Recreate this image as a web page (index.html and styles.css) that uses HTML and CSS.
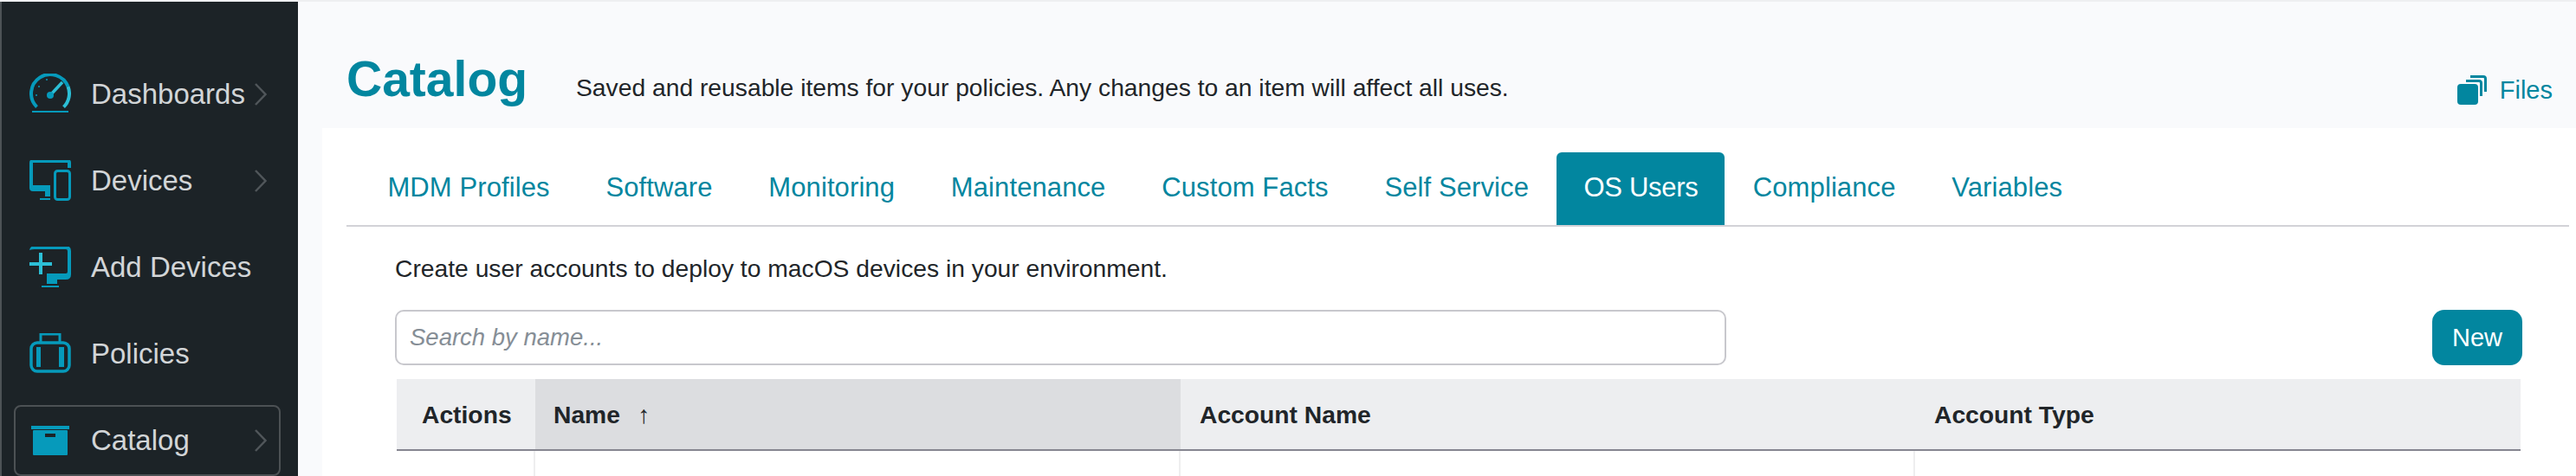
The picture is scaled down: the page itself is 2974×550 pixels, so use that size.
FILE: index.html
```html
<!DOCTYPE html>
<html lang="en">
<head>
<meta charset="utf-8">
<title>Catalog</title>
<link rel="stylesheet" href="styles.css">
</head>
<body>
<div class="app">
  <aside class="sidebar">
    <nav class="nav">
      <a class="nav-item">
        <svg class="nav-icon" width="48" height="48" viewBox="0 0 48 48"><path class="ln" d="M8.500 38.600A22 22 0 1 1 44.500 15" stroke-width="4"/><path class="lt" d="M44.500 15A22 22 0 0 1 39.500 38.600" stroke-width="4"/><path class="ln" d="M3 44H45" stroke-width="2"/><path class="lt" d="M24 25L38 10" stroke-width="3.500"/><circle class="fl" cx="24" cy="25" r="4"/><circle class="fl" cx="11" cy="15" r="1"/><circle class="fl" cx="20" cy="7" r="1"/><circle class="fl" cx="8" cy="25" r="1"/></svg>
        <span class="nav-label">Dashboards</span>
        <svg class="chev" width="14" height="26" viewBox="0 0 14 26"><path d="M1 1L12.500 13L1 25"/></svg>
      </a>
      <a class="nav-item">
        <svg class="nav-icon" width="48" height="48" viewBox="0 1 48 48"><path class="fl" d="M4 0H44Q48 0 48 4V10H44V4H4V30H24V43H18V37H4Q0 37 0 33V4Q0 0 4 0Z"/><rect class="fl" x="12" y="45" width="12" height="2"/><rect class="ln" x="29.500" y="13.500" width="17" height="33" rx="3" stroke-width="3"/></svg>
        <span class="nav-label">Devices</span>
        <svg class="chev" width="14" height="26" viewBox="0 0 14 26"><path d="M1 1L12.500 13L1 25"/></svg>
      </a>
      <a class="nav-item">
        <svg class="nav-icon" width="48" height="48" viewBox="0 1 48 48"><path class="fl" d="M0 5Q1 0 6 0H42Q48 0 48 6V33Q48 39 42 39H32V44H20V32H42Q44 32 44 30V6Q44 4 42 4H6Q3 4 0 5Z"/><rect class="fl" x="14" y="46" width="20" height="2"/><path class="lt" d="M0 21H26M13 8V33" stroke-width="4"/></svg>
        <span class="nav-label">Add Devices</span>
      </a>
      <a class="nav-item">
        <svg class="nav-icon" width="48" height="48" viewBox="0 1 48 48"><rect class="ln" x="2" y="12" width="44" height="33" rx="7" stroke-width="3.500"/><path class="ln" d="M13 11V2H35V11" stroke-width="3"/><rect class="fl" x="8" y="17" width="5" height="23"/><rect class="fl" x="34" y="17" width="6" height="23"/></svg>
        <span class="nav-label">Policies</span>
      </a>
      <a class="nav-item nav-item-active">
        <svg class="nav-icon" width="48" height="48" viewBox="0 0 48 48"><rect class="fl" x="2" y="7" width="44" height="4"/><rect class="fl" x="4" y="12" width="40" height="29" rx="1"/><rect class="hole" x="18" y="16" width="12" height="4"/></svg>
        <span class="nav-label">Catalog</span>
        <svg class="chev" width="14" height="26" viewBox="0 0 14 26"><path d="M1 1L12.500 13L1 25"/></svg>
      </a>
    </nav>
  </aside>
  <main class="main">
    <header class="page-head">
      <h1 class="page-title">Catalog</h1>
      <p class="page-desc">Saved and reusable items for your policies. Any changes to an item will affect all uses.</p>
      <a class="files-link">
        <svg class="files-icon" width="34" height="34" viewBox="0 0 34 34"><path class="files-back" d="M15 1.500H30Q32.500 1.500 32.500 4V19M10 6.500H25Q27.500 6.500 27.500 9V24"/><rect class="files-front" x="0" y="10" width="24" height="24" rx="4"/></svg>
        <span>Files</span>
      </a>
    </header>
    <section class="panel">
      <div class="tabs">
        <a class="tab">MDM Profiles</a>
        <a class="tab">Software</a>
        <a class="tab">Monitoring</a>
        <a class="tab">Maintenance</a>
        <a class="tab">Custom Facts</a>
        <a class="tab">Self Service</a>
        <a class="tab tab-active">OS Users</a>
        <a class="tab">Compliance</a>
        <a class="tab">Variables</a>
      </div>
      <div class="content">
        <p class="intro">Create user accounts to deploy to macOS devices in your environment.</p>
        <div class="toolbar">
          <input class="search" type="text" placeholder="Search by name...">
          <button class="btn-new" type="button">New</button>
        </div>
        <div class="table">
          <div class="row row-head">
            <div class="cell cell-actions">Actions</div>
            <div class="cell cell-name cell-sorted">Name<span class="sort-arrow">↑</span></div>
            <div class="cell cell-account">Account Name</div>
            <div class="cell cell-type">Account Type</div>
          </div>
          <div class="row row-body">
            <div class="cell cell-actions"></div>
            <div class="cell cell-name"></div>
            <div class="cell cell-account"></div>
            <div class="cell cell-type"></div>
          </div>
        </div>
      </div>
    </section>
  </main>
</div>
</body>
</html>
```

FILE: styles.css
```css
* { box-sizing: border-box; }
html, body { margin: 0; height: 550px; overflow: hidden; background: #f9fafc; }
body { font-family: "Liberation Sans", Arial, sans-serif; color: #212529; border-top: 2px solid #eeeff1; }
.app { display: flex; height: 548px; }

.sidebar { width: 344px; flex: none; background: #1c2327; border-left: 2px solid #4d5356; }
.nav { display: flex; flex-direction: column; gap: 18px; padding: 66px 18px 0 14px; }
.nav-item { display: flex; align-items: center; height: 82px; padding: 0 14px 0 16px; border: 2px solid transparent; border-radius: 8px; color: #d2d5d7; font-size: 33px; }
.nav-item-active { border-color: #4c5154; margin-right: 2px; padding-right: 12px; }
.nav-icon { flex: none; margin-right: 23px; }
.nav-label { flex: 1; }
.chev { flex: none; margin-right: 2px; }
.chev path { fill: none; stroke: #50565a; stroke-width: 2.500; }
.ln, .lt { fill: none; }
.ln { stroke: #069abb; }
.lt { stroke: #2cbfd6; }
.fl { fill: #069abb; }
.hole { fill: #1c2327; }

.main { flex: 1; min-width: 0; display: flex; flex-direction: column; overflow: hidden; }
.page-head { flex: none; display: flex; align-items: center; height: 146px; padding: 32px 27px 0 56px; }
.page-title { margin: 0 56px 0 0; font-size: 57px; font-weight: 700; color: #02869f; line-height: 1; }
.page-desc { margin: 20px 0 0; flex: 1; font-size: 28.250px; }
.files-link { display: flex; align-items: center; gap: 15px; color: #02869f; font-size: 29px; padding-top: 26px; }
.files-back { fill: none; stroke: #02869f; stroke-width: 3; }
.files-front { fill: #02869f; }

.panel { flex: none; margin-left: 28px; background: #fff; padding: 28px 8px 0 28px; }
.tabs { display: flex; height: 86px; padding-left: 15px; border-bottom: 2px solid #d2d2d7; }
.tab { display: flex; align-items: center; height: 84px; padding: 0 32.400px 3px; color: #02869f; font-size: 31px; letter-spacing: 0.100px; border-radius: 6px 6px 0 0; }
.tab-active { padding: 0 31px 3px; letter-spacing: -0.300px; background: #02869f; color: #fff; }

.content { padding: 0 56px 0 56px; }
.intro { margin: 0; padding-top: 31px; height: 96px; font-size: 28.250px; line-height: 34px; }
.toolbar { display: flex; justify-content: space-between; height: 64px; margin-right: -2px; }
.search { width: 1537px; height: 64px; padding: 0 15px; border: 2px solid #c8c8cd; border-radius: 10px; background: #fff; font: italic 27.500px "Liberation Sans", Arial, sans-serif; outline: none; }
.search::placeholder { color: #868e96; opacity: 1; }
.btn-new { width: 104px; height: 64px; border: 0; border-radius: 14px; background: #02869f; color: #fff; font: 29px "Liberation Sans", Arial, sans-serif; }

.table { margin-top: 16px; margin-left: 2px; }
.row { display: flex; }
.row-head { height: 83px; background: #edeef0; border-bottom: 2px solid #868690; font-weight: 700; font-size: 28.250px; }
.row-head .cell { padding-top: 2px; }
.row-body { height: 60px; }
.cell { display: flex; align-items: center; padding-left: 22px; }
.cell-actions { width: 160px; padding-left: 29px; }
.cell-name { width: 745px; padding-left: 21px; }
.cell-account { width: 848px; }
.cell-type { flex: 1; }
.cell-sorted { background: #dcdde0; }
.sort-arrow { margin-left: 20px; font-weight: 400; }
.row-body .cell:not(:last-child) { border-right: 2px solid #eeeeef; }
```
